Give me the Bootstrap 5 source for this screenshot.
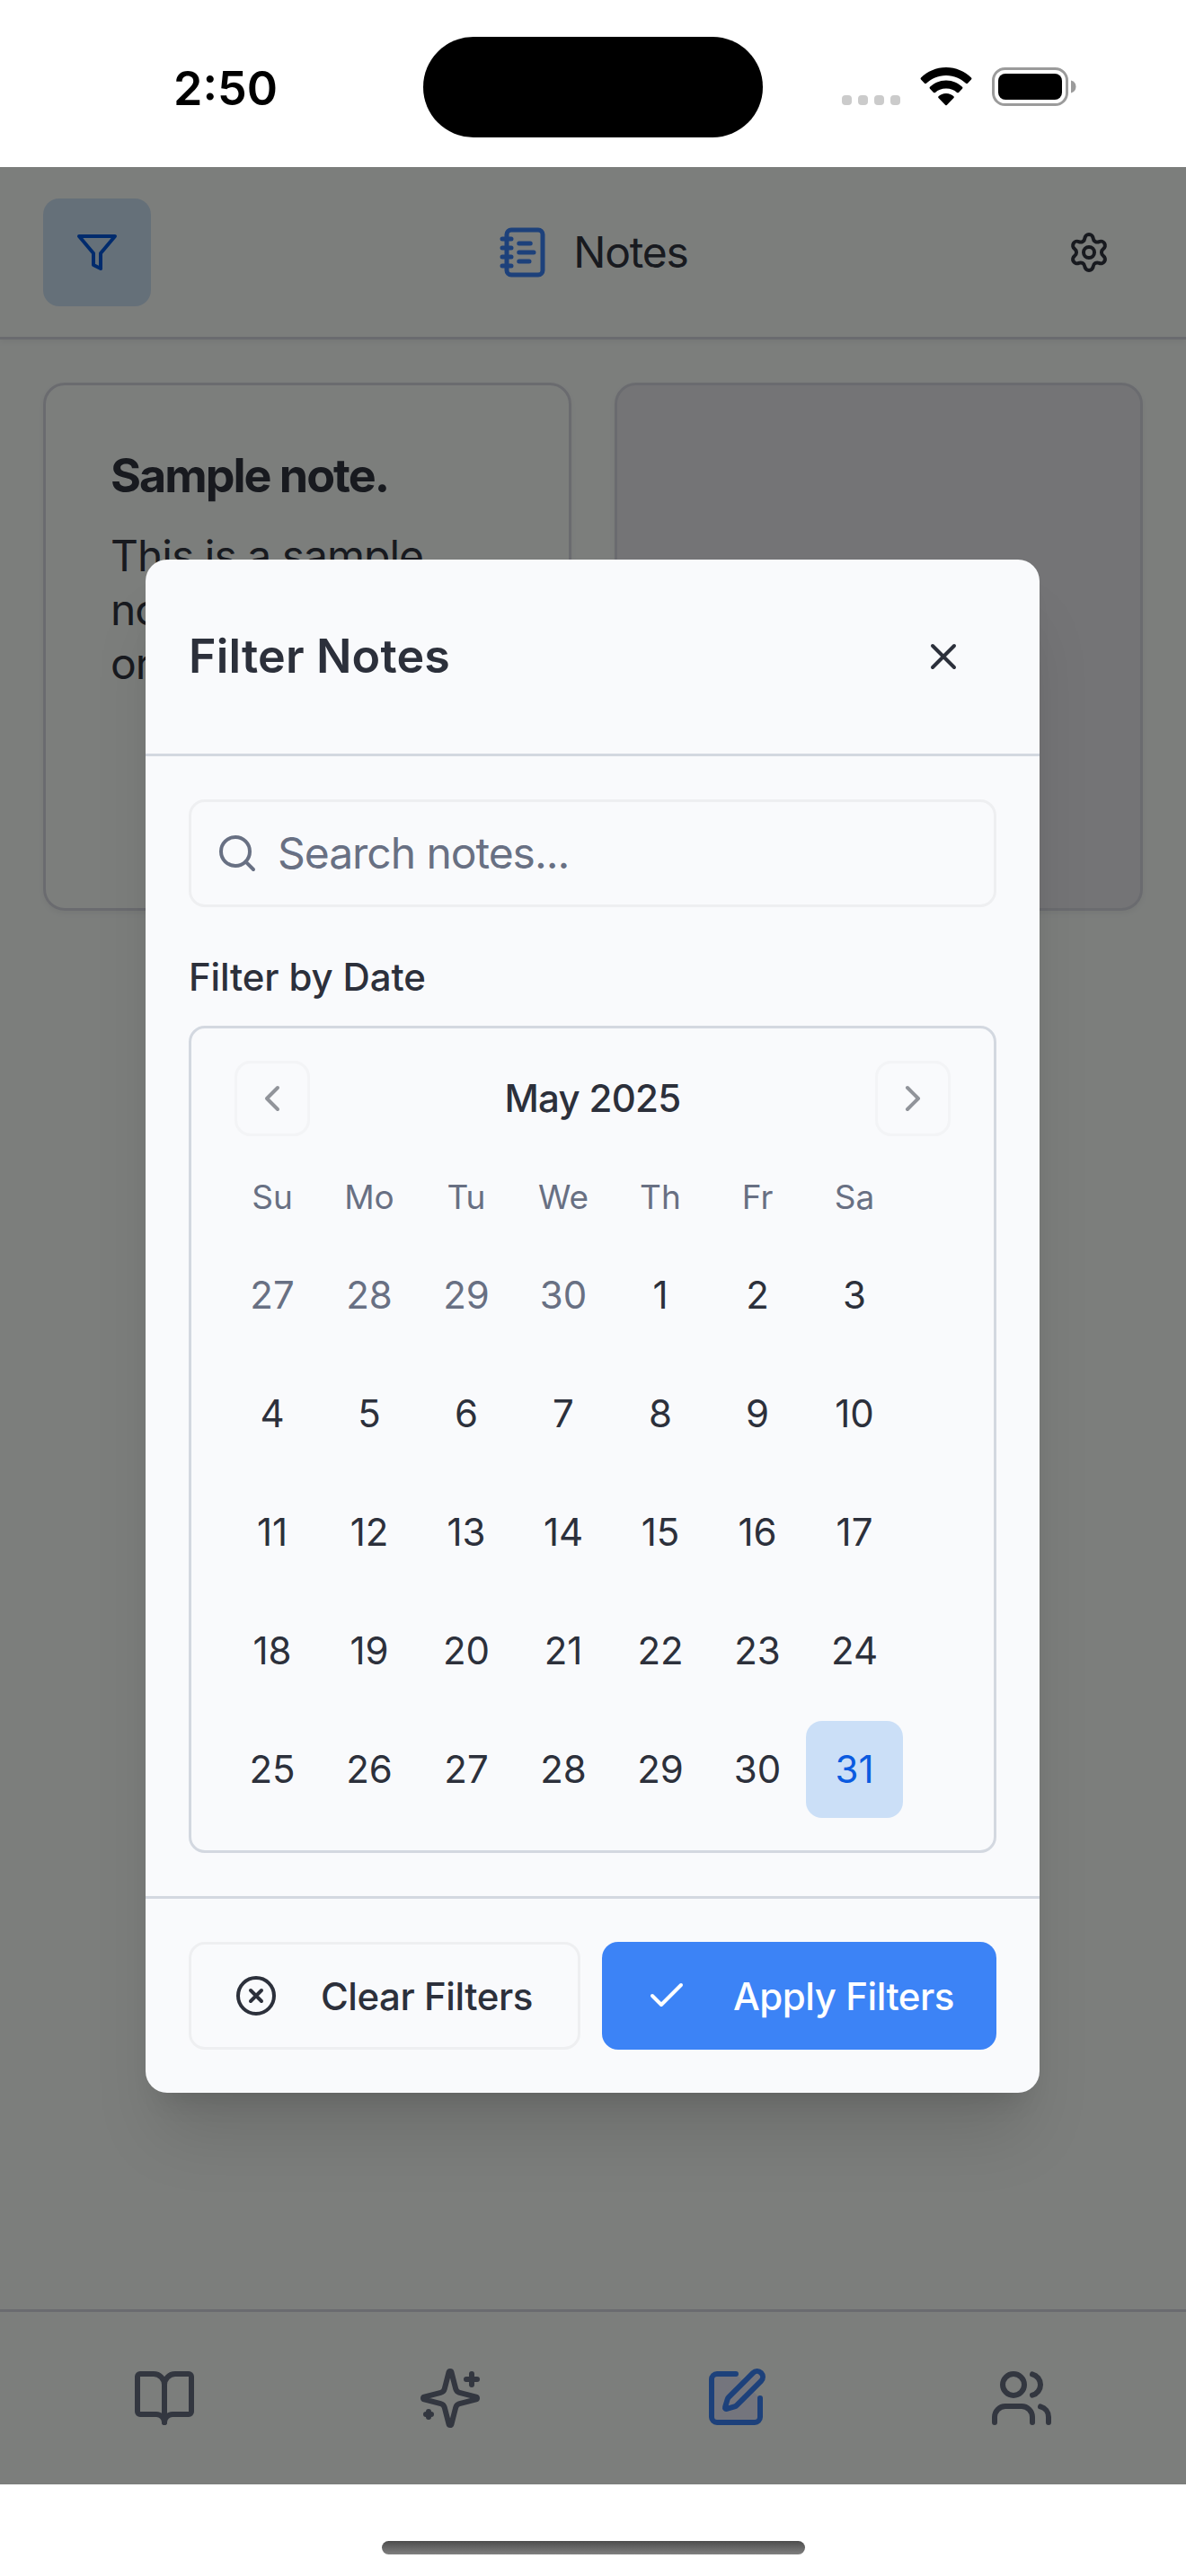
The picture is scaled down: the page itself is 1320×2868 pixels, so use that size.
<!DOCTYPE html>
<html lang="en">
<head>
<meta charset="utf-8">
<meta name="viewport" content="width=device-width, initial-scale=1">
<title>Notes</title>
<link href="https://cdn.jsdelivr.net/npm/bootstrap@5.3.0/dist/css/bootstrap.min.css" rel="stylesheet">
<style>
  :root { --ink:#2c303b; --muted:#687083; --line:#d3d8e0; --faint:#eeeff1; --surface:#f9fafc; --blue:#3b82f6; }
  body { width:1320px; height:2868px; font-family:Inter,"Liberation Sans",sans-serif; font-size:42px; line-height:1.4; color:var(--ink); background:#fff; overflow:hidden; }
  svg { display:block; flex:none; }
  .lucide { fill:none; stroke:currentColor; stroke-width:2; stroke-linecap:round; stroke-linejoin:round; width:48px; height:48px; }
  .status-bar { height:186px; padding-bottom:3px; color:#000; }
  .clock { width:471px; padding:15px 0 0 31px; font-size:52px; font-weight:600; line-height:1; text-align:center; }
  .island { width:378px; height:112px; margin-top:11px; border-radius:56px; background:#000; }
  .signals { margin-left:88px; padding-top:11px; }
  .signal-dots { gap:6.8px; padding-top:30px; }
  .signal-dots i { width:11.2px; height:11px; border-radius:4px; background:#cbcbcb; }
  .glyph { margin:-1px 0 0 22px; }
  .app-area { height:2580px; background:#f8fcf9; }
  .app-header { height:192px; padding:1px 48px 0; border-bottom:3px solid #d5d7de; box-shadow:0 3px 6px rgba(0,0,0,.05); }
  .square-btn { width:120px; height:120px; padding:0; border:0; border-radius:18px; color:inherit; }
  .filter-btn { background:#cbe0f2; color:#0056da; }
  .app-title { gap:24px; font-size:48px; letter-spacing:-1.2px; color:#30343f; }
  .app-title svg { width:60px; height:60px; color:var(--blue); }
  .note-grid { padding:48px; gap:48px; }
  .note-card { width:588px; height:588px; padding:72px; border:3px solid #d5d7de; border-radius:24px; box-shadow:0 3px 6px rgba(0,0,0,.05); color:#30343f; }
  .note-card.blank { background:#e9e9ed; }
  .note-title { font-size:52px; font-weight:700; line-height:60px; letter-spacing:-2px; margin:-1px 0 29px; }
  .note-text { font-size:48px; line-height:60px; letter-spacing:-1px; }
  .tab-bar { height:195px; border-top:3px solid #d5d7de; padding:0 24px; color:#666e80; }
  .tab-bar svg { width:72px; height:72px; }
  .tab-bar .current { color:var(--blue); }
  .tab-bar .current svg { fill:#e8ebfb; }
  .scrim { background:rgba(0,0,0,.5); padding:1px 1px 0 0; }
  .sheet { width:995px; height:1707px; background:var(--surface); border-radius:24px; box-shadow:0 60px 75px -15px rgba(0,0,0,.12),0 24px 30px -18px rgba(0,0,0,.12); }
  .sheet-head { height:219px; padding:0 47px 0 48px; border-bottom:3px solid var(--line); }
  .sheet-title { font-size:52px; font-weight:600; line-height:1; letter-spacing:.15px; margin:0; }
  .sheet-body { padding:48px; height:1269px; }
  .search-box { height:120px; padding:0 27px; gap:21px; border:3px solid var(--faint); border-radius:18px; color:var(--muted); font-size:48px; letter-spacing:-1.05px; }
  .date-label { font-weight:500; line-height:60px; letter-spacing:-.15px; margin:48px 0 24px; }
  .calendar { height:921px; border:3px solid var(--line); border-radius:18px; padding:36px; }
  .month-row { padding:0 12px; height:84px; font-weight:500; letter-spacing:-.7px; }
  .month-btn { width:84px; height:84px; padding:0; border:3px solid var(--faint); border-radius:18px; opacity:.5; background:none; color:var(--ink); }
  .week-names { margin-top:36px; height:63px; font-size:37px; color:var(--muted); }
  .week { margin-top:24px; height:108px; }
  .week > span, .week-names > span { width:108px; display:flex; align-items:center; justify-content:center; }
  .week .outside { color:var(--muted); }
  .week .today { background:#cbdff7; color:#0b5be0; border-radius:18px; }
  .sheet-foot { height:219px; border-top:3px solid var(--line); padding:0 48px; gap:24px; }
  .action { height:120px; border-radius:18px; padding:0 48px; gap:48px; font-size:42px; font-weight:500; letter-spacing:-.45px; border:3px solid var(--faint); color:var(--ink); white-space:nowrap; }
  .action.clear { width:436px; }
  .action.apply { width:439px; border:0; background:#3c83f6; color:#fff; gap:50px; }
  .home-area { height:102px; padding-top:63px; }
  .home-pill { width:471px; height:15px; border-radius:8px; background:linear-gradient(#4c4c4c,#808080); }
</style>
</head>
<body>
<div class="status-bar d-flex align-items-center">
  <div class="clock"><span>2:50</span></div>
  <div class="island"></div>
  <div class="signals d-flex align-items-start">
    <div class="signal-dots d-flex"><i></i><i></i><i></i><i></i></div>
    <svg class="glyph" width="58" height="43" viewBox="0 0 58 43"><path d="M29 0C40 0 50 4.500 57 11.500Q58 12.500 57 13.500L53 17.800Q52 18.700 51 17.800C45.500 12.500 38 9 29 9S12.500 12.500 7 17.800Q6 18.700 5 17.800L1 13.500Q0 12.500 1 11.500C8 4.500 18 0 29 0Z"/><path d="M29 14.500C36.500 14.500 42 17.500 47 21.800Q48 22.700 47 23.700L43 27.900Q42 28.800 41 27.900C38 25.300 34 23.500 29 23.500S20 25.300 17 27.900Q16 28.800 15 27.900L11 23.700Q10 22.700 11 21.800C16 17.500 21.500 14.500 29 14.500Z"/><path d="M29 29C32.500 29 35.500 30.500 37.500 32.300Q38.300 33.200 37.500 34L29.800 42Q29 42.700 28.200 42L20.500 34Q19.700 33.200 20.500 32.300C22.500 30.500 25.500 29 29 29Z"/></svg>
    <svg class="glyph" width="95" height="43" viewBox="0 0 95 43"><rect x="1.500" y="1.500" width="82" height="40" rx="13" fill="none" stroke="#9b9b9b" stroke-width="3"/><rect x="7" y="7" width="71" height="29" rx="8"/><path d="M88 14.500C91.500 15.500 93.500 18 93.500 21.500S91.500 27.500 88 28.500Z" fill="#9b9b9b"/></svg>
  </div>
</div>

<div class="app-area position-relative d-flex flex-column">
  <header class="app-header d-flex align-items-center justify-content-between">
    <button class="square-btn filter-btn btn d-flex align-items-center justify-content-center" aria-label="Filter"><svg class="lucide" viewBox="0 0 24 24"><polygon points="22 3 2 3 10 12.460 10 19 14 21 14 12.460 22 3"/></svg></button>
    <div class="app-title d-flex align-items-center">
      <svg class="lucide" viewBox="0 0 24 24"><path d="M2 6h4M2 10h4M2 14h4M2 18h4"/><rect width="16" height="20" x="4" y="2" rx="2"/><path d="M9.500 8h5M9.500 12H16M9.500 16H14"/></svg>
      <span>Notes</span>
    </div>
    <button class="square-btn btn d-flex align-items-center justify-content-center" aria-label="Settings"><svg class="lucide" viewBox="0 0 24 24" color="#30343f"><path d="M9.671 4.136a2.340 2.340 0 0 1 4.659 0 2.340 2.340 0 0 0 3.319 1.915 2.340 2.340 0 0 1 2.330 4.033 2.340 2.340 0 0 0 0 3.831 2.340 2.340 0 0 1-2.330 4.033 2.340 2.340 0 0 0-3.319 1.915 2.340 2.340 0 0 1-4.659 0 2.340 2.340 0 0 0-3.320-1.915 2.340 2.340 0 0 1-2.330-4.033 2.340 2.340 0 0 0 0-3.831A2.340 2.340 0 0 1 6.350 6.051a2.340 2.340 0 0 0 3.319-1.915"/><circle cx="12" cy="12" r="3"/></svg></button>
  </header>

  <main class="note-grid d-flex flex-grow-1">
    <article class="note-card">
      <h2 class="note-title">Sample note.</h2>
      <div class="note-text">This is a sample<br>note<br>or</div>
    </article>
    <article class="note-card blank"></article>
  </main>

  <nav class="tab-bar d-flex align-items-center">
    <div class="col d-flex justify-content-center"><svg class="lucide" viewBox="0 0 24 24"><path d="M12 7v14"/><path d="M3 18a1 1 0 0 1-1-1V4a1 1 0 0 1 1-1h5a4 4 0 0 1 4 4 4 4 0 0 1 4-4h5a1 1 0 0 1 1 1v13a1 1 0 0 1-1 1h-6a3 3 0 0 0-3 3 3 3 0 0 0-3-3z"/></svg></div>
    <div class="col d-flex justify-content-center"><svg class="lucide" viewBox="0 0 24 24"><path d="M9.937 15.500A2 2 0 0 0 8.500 14.063l-6.135-1.582a.5.5 0 0 1 0-.962L8.500 9.936A2 2 0 0 0 9.937 8.500l1.582-6.135a.5.5 0 0 1 .963 0L14.063 8.500A2 2 0 0 0 15.500 9.937l6.135 1.581a.5.5 0 0 1 0 .964L15.500 14.063a2 2 0 0 0-1.437 1.437l-1.582 6.135a.5.5 0 0 1-.963 0z"/><path d="M20 3v4M22 5h-4M4 17v2M5 18H3"/></svg></div>
    <div class="col d-flex justify-content-center current"><svg class="lucide" viewBox="0 0 24 24"><path d="M12 3H5a2 2 0 0 0-2 2v14a2 2 0 0 0 2 2h14a2 2 0 0 0 2-2v-7"/><path d="M18.375 2.625a1 1 0 0 1 3 3l-9.013 9.014a2 2 0 0 1-.853.505l-2.873.840a.5.5 0 0 1-.620-.620l.840-2.873a2 2 0 0 1 .506-.852z"/></svg></div>
    <div class="col d-flex justify-content-center"><svg class="lucide" viewBox="0 0 24 24"><path d="M16 21v-2a4 4 0 0 0-4-4H6a4 4 0 0 0-4 4v2"/><circle cx="9" cy="7" r="4"/><path d="M22 21v-2a4 4 0 0 0-3-3.870M16 3.130a4 4 0 0 1 0 7.750"/></svg></div>
  </nav>

  <div class="scrim position-absolute top-0 start-0 w-100 h-100 d-flex align-items-center justify-content-center">
    <section class="sheet" role="dialog" aria-label="Filter Notes">
      <div class="sheet-head d-flex align-items-center justify-content-between">
        <h1 class="sheet-title">Filter Notes</h1>
        <button class="square-btn btn d-flex align-items-center justify-content-center" aria-label="Close"><svg class="lucide" viewBox="0 0 24 24" color="#2c303b"><path d="M18 6 6 18M6 6l12 12"/></svg></button>
      </div>
      <div class="sheet-body">
        <div class="search-box d-flex align-items-center">
          <svg class="lucide" viewBox="0 0 24 24"><circle cx="11" cy="11" r="8"/><path d="m21 21-4.300-4.300"/></svg>
          <span class="search-hint">Search notes...</span>
        </div>
        <div class="date-label"><span>Filter by Date</span></div>
        <div class="calendar">
          <div class="month-row d-flex align-items-center justify-content-between">
            <button class="month-btn d-flex align-items-center justify-content-center" aria-label="Previous month"><svg class="lucide" viewBox="0 0 24 24"><path d="m15 18-6-6 6-6"/></svg></button>
            <span>May 2025</span>
            <button class="month-btn d-flex align-items-center justify-content-center" aria-label="Next month"><svg class="lucide" viewBox="0 0 24 24"><path d="m9 18 6-6-6-6"/></svg></button>
          </div>
          <div class="week-names d-flex"><span>Su</span><span>Mo</span><span>Tu</span><span>We</span><span>Th</span><span>Fr</span><span>Sa</span></div>
          <div class="week d-flex"><span class="outside">27</span><span class="outside">28</span><span class="outside">29</span><span class="outside">30</span><span>1</span><span>2</span><span>3</span></div>
          <div class="week d-flex"><span>4</span><span>5</span><span>6</span><span>7</span><span>8</span><span>9</span><span>10</span></div>
          <div class="week d-flex"><span>11</span><span>12</span><span>13</span><span>14</span><span>15</span><span>16</span><span>17</span></div>
          <div class="week d-flex"><span>18</span><span>19</span><span>20</span><span>21</span><span>22</span><span>23</span><span>24</span></div>
          <div class="week d-flex"><span>25</span><span>26</span><span>27</span><span>28</span><span>29</span><span>30</span><span class="today">31</span></div>
        </div>
      </div>
      <div class="sheet-foot d-flex align-items-center">
        <button class="action clear btn d-flex align-items-center"><svg class="lucide" viewBox="0 0 24 24"><circle cx="12" cy="12" r="10"/><path d="m15 9-6 6M9 9l6 6"/></svg><span>Clear Filters</span></button>
        <button class="action apply btn d-flex align-items-center"><svg class="lucide" viewBox="0 0 24 24"><path d="M20 6 9 17l-5-5"/></svg><span>Apply Filters</span></button>
      </div>
    </section>
  </div>
</div>

<div class="home-area d-flex justify-content-center"><div class="home-pill"></div></div>
<script src="https://cdn.jsdelivr.net/npm/bootstrap@5.3.0/dist/js/bootstrap.bundle.min.js"></script>
</body>
</html>
